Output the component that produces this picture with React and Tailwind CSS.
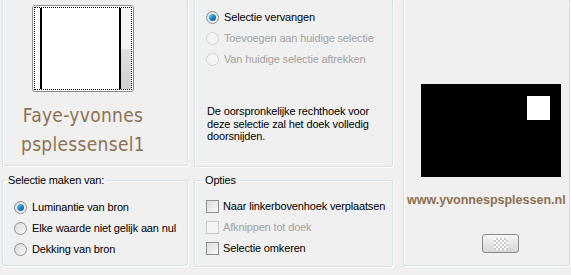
const font = { fontFamily: '"Liberation Sans", Arial, sans-serif' };

function Radio({ checked, disabled, label }) {
  return (
    <div className="flex h-[21px] items-center gap-[5px]">
      <span
        className={`flex h-[13px] w-[13px] items-center justify-center rounded-full border ${
          disabled ? 'border-[#d3d3d3] bg-[#f4f4f4]' : 'border-[#8e8f8f] bg-gradient-to-br from-[#d9d9d9] to-[#fbfbfb]'
        }`}
      >
        {checked && <span className="h-[7px] w-[7px] rounded-full bg-gradient-to-br from-[#7fd0f7] via-[#1c8ad1] to-[#0a4f8a]" />}
      </span>
      <span className={disabled ? 'text-[#a3a3a3]' : 'text-black'}>{label}</span>
    </div>
  );
}

function Check({ disabled, label }) {
  return (
    <div className="flex h-[21px] items-center gap-[4px]">
      <span
        className={`h-[13px] w-[13px] border ${
          disabled ? 'border-[#c9c9c9] bg-[#f4f4f4]' : 'border-[#8e8f8f] bg-gradient-to-br from-[#dcdcdc] to-[#f8f8f8]'
        }`}
      />
      <span className={disabled ? 'text-[#a3a3a3]' : 'text-black'}>{label}</span>
    </div>
  );
}

export default function App() {
  return (
    <div className="flex h-[275px] w-[571px] overflow-hidden bg-[#f0f0f0] text-[11px] tracking-[-0.15px]" style={font}>
      {/* left column */}
      <div className="ml-[2px] flex w-[186px] flex-col">
        <div className="h-[166px] rounded-b-[3px] border border-t-0 border-[#d5dfe5] shadow-[inset_1px_0_0_#fff,1px_1px_0_#fff]">
          <div className="ml-[29px] mt-[5px] flex h-[87px] w-[102px] rounded-[3px] border border-[#8c8c8c] bg-white p-[1px]">
            <div className="flex flex-1 border border-dotted border-black">
              <div className="ml-[5px] w-[2px] bg-black" />
              <div className="flex-1" />
              <div className="w-[2px] bg-black" />
              <div className="flex w-[10px] flex-col">
                <div className="flex-1 bg-[#f4f4f4]" />
                <div className="h-[40px] bg-gradient-to-b from-[#e0e0e0] to-[#cfcfcf]" />
              </div>
            </div>
          </div>
          <div
            className="mt-[9px] flex flex-col items-center pr-[24px] text-[19px] leading-[29px] tracking-[0.3px] text-[#8f7253]"
            style={{ fontFamily: '"DejaVu Sans Condensed", "DejaVu Sans", sans-serif' }}
          >
            <span>Faye-yvonnes</span>
            <span>psplessensel1</span>
          </div>
        </div>
        <fieldset className="mt-[8px] h-[92px] rounded-[3px] border border-[#d5dfe5] shadow-[inset_1px_1px_0_#fff,1px_1px_0_#fff]">
          <legend className="ml-[3px] px-[2px] leading-[13px]">Selectie maken van:</legend>
          <div className="pl-[11px] pt-[10px]">
            <Radio checked label="Luminantie van bron" />
            <Radio label="Elke waarde niet gelijk aan nul" />
            <Radio label="Dekking van bron" />
          </div>
        </fieldset>
      </div>

      {/* middle column */}
      <div className="ml-[6px] flex w-[199px] flex-col">
        <div className="h-[167px] rounded-b-[3px] border border-t-0 border-[#d5dfe5] pl-[11px] pt-[7px] shadow-[inset_1px_0_0_#fff,1px_1px_0_#fff]">
          <Radio checked label="Selectie vervangen" />
          <Radio disabled label="Toevoegen aan huidige selectie" />
          <Radio disabled label="Van huidige selectie aftrekken" />
          <p className="mt-[35px] pl-[1px] pr-[8px] leading-[12.5px]">
            De oorspronkelijke rechthoek voor deze selectie zal het doek volledig doorsnijden.
          </p>
        </div>
        <fieldset className="mt-[7px] h-[93px] rounded-[3px] border border-[#d5dfe5] shadow-[inset_1px_1px_0_#fff,1px_1px_0_#fff]">
          <legend className="ml-[8px] px-[2px] leading-[13px]">Opties</legend>
          <div className="pl-[11px] pt-[9px]">
            <Check label="Naar linkerbovenhoek verplaatsen" />
            <Check disabled label="Afknippen tot doek" />
            <Check label="Selectie omkeren" />
          </div>
        </fieldset>
      </div>

      {/* right column */}
      <div className="ml-[10px] h-[266px] w-[167px] rounded-b-[3px] border border-t-0 border-[#d5dfe5] shadow-[inset_1px_0_0_#fff,1px_1px_0_#fff]">
        <div className="ml-[17px] mt-[84px] flex h-[93px] w-[140px] bg-black pl-[106px] pt-[12px]">
          <div className="h-[24px] w-[23px] bg-white" />
        </div>
        <div className="mt-[15px] pl-[3px] text-[12.5px] font-bold leading-[16px] tracking-[0px] text-[#8d7050]">
          www.yvonnespsplessen.nl
        </div>
        <div className="ml-[78px] mt-[26px] flex h-[19px] w-[37px] items-center justify-center rounded-[3px] border border-[#8a8a8a] bg-gradient-to-b from-[#f6f6f6] to-[#d6d6d6]">
          <svg width="14" height="12" viewBox="0 0 14 12">
            {[0, 1, 2, 3, 4, 5].map((r) =>
              [0, 1, 2, 3, 4, 5, 6].map((c) => (
                <rect key={`${r}-${c}`} x={c * 2} y={r * 2} width="2" height="2" fill={(r + c) % 2 ? '#c8c8c8' : '#ffffff'} />
              ))
            )}
          </svg>
        </div>
      </div>
    </div>
  );
}
